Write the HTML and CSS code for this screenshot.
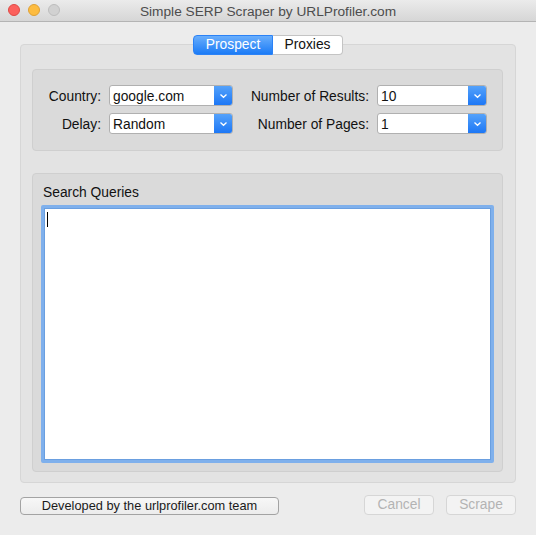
FILE: index.html
```html
<!DOCTYPE html>
<html>
<head>
<meta charset="utf-8">
<link rel="stylesheet" href="styles.css">
</head>
<body>
<div class="window">
  <div class="titlebar">
    <div class="lights">
      <span class="light red"></span>
      <span class="light yellow"></span>
      <span class="light gray"></span>
    </div>
    <div class="title">Simple SERP Scraper by URLProfiler.com</div>
  </div>
  <div class="content">
    <div class="tabs">
      <div class="seg seg-active">Prospect</div>
      <div class="seg">Proxies</div>
    </div>
    <div class="tabpanel">
      <div class="settings">
        <label class="lbl">Country:</label>
        <div class="select sel1"><span class="val">google.com</span><span class="arrow"><svg width="9" height="6" viewBox="0 0 9 6"><path d="M1.5 1.5 L4.5 4.3 L7.5 1.5" fill="none" stroke="#fff" stroke-width="1.3"/></svg></span></div>
        <label class="lbl">Number of Results:</label>
        <div class="select sel2"><span class="val">10</span><span class="arrow"><svg width="9" height="6" viewBox="0 0 9 6"><path d="M1.5 1.5 L4.5 4.3 L7.5 1.5" fill="none" stroke="#fff" stroke-width="1.3"/></svg></span></div>
        <label class="lbl">Delay:</label>
        <div class="select sel1"><span class="val">Random</span><span class="arrow"><svg width="9" height="6" viewBox="0 0 9 6"><path d="M1.5 1.5 L4.5 4.3 L7.5 1.5" fill="none" stroke="#fff" stroke-width="1.3"/></svg></span></div>
        <label class="lbl">Number of Pages:</label>
        <div class="select sel2"><span class="val">1</span><span class="arrow"><svg width="9" height="6" viewBox="0 0 9 6"><path d="M1.5 1.5 L4.5 4.3 L7.5 1.5" fill="none" stroke="#fff" stroke-width="1.3"/></svg></span></div>
      </div>
      <div class="queries">
        <div class="qlabel">Search Queries</div>
        <div class="textarea"><span class="caret"></span></div>
      </div>
    </div>
    <div class="footer">
      <div class="btn credit">Developed by the urlprofiler.com team</div>
      <div class="actions">
        <div class="btn disabled">Cancel</div>
        <div class="btn disabled">Scrape</div>
      </div>
    </div>
  </div>
</div>
</body>
</html>
```

FILE: styles.css
```css
html, body {
  margin: 0;
  padding: 0;
}
body {
  font-family: "Liberation Sans", Arial, sans-serif;
  font-size: 13.8px;
  color: #1a1a1a;
  background: #ececec;
}
.window {
  width: 536px;
  height: 535px;
  background: #ececec;
  overflow: hidden;
}
.titlebar {
  height: 21px;
  border-bottom: 1px solid #b4b4b4;
  background: linear-gradient(#ebebeb, #d6d6d6);
  display: flex;
  align-items: center;
  position: relative;
}
.lights {
  display: flex;
  gap: 8px;
  padding-left: 8px;
  position: absolute;
  left: 0;
  top: 4px;
}
.light {
  width: 12px;
  height: 12px;
  border-radius: 50%;
  box-sizing: border-box;
}
.red { background: #fc605c; border: 1px solid #de4a45; }
.yellow { background: #fdbc40; border: 1px solid #dea135; }
.gray { background: #d1d1d1; border: 1px solid #bdbdbd; }
.title {
  flex: 1;
  text-align: center;
  color: #4d4d4d;
  font-size: 13.7px;
  padding-top: 1px;
}
.content {
  padding: 13px 20px 0 20px;
}
.tabs {
  display: flex;
  justify-content: center;
  position: relative;
  z-index: 2;
  height: 20px;
}
.seg {
  height: 20px;
  box-sizing: border-box;
  line-height: 18px;
  text-align: center;
  background: #fff;
  border: 1px solid #c4c4c4;
  border-left: none;
  border-radius: 0 4px 4px 0;
  width: 70px;
  color: #111;
}
.seg-active {
  width: 80px;
  color: #fff;
  border: 1px solid #2b82f6;
  border-radius: 4px 0 0 4px;
  background: linear-gradient(#69aefc, #1b7bf6);
}
.tabpanel {
  margin-top: -11px;
  height: 439px;
  box-sizing: border-box;
  background: #e3e3e3;
  border: 1px solid #d6d6d6;
  border-radius: 4px;
  padding: 24px 12px 0 11px;
}
.settings {
  height: 82px;
  box-sizing: border-box;
  background: #dadada;
  border: 1px solid #cfcfcf;
  border-radius: 4px;
  display: grid;
  grid-template-columns: 68px 124px 128px 110px;
  grid-template-rows: 21px 21px;
  column-gap: 8px;
  row-gap: 7px;
  padding-top: 15px;
  align-items: center;
}
.lbl {
  text-align: right;
  white-space: nowrap;
  color: #111;
  padding-top: 2px;
}
.select {
  height: 21px;
  box-sizing: border-box;
  background: #fff;
  border: 1px solid #b0b0b0;
  border-radius: 3px;
  display: flex;
  align-items: center;
  position: relative;
  overflow: hidden;
}
.val {
  flex: 1;
  padding-left: 3px;
  padding-top: 2px;
  color: #111;
}
.arrow {
  width: 19px;
  height: 21px;
  margin: -1px -1px -1px 0;
  background: linear-gradient(#57a4fb, #1a75f5);
  border-radius: 0 3px 3px 0;
  display: flex;
  align-items: center;
  justify-content: center;
}
.queries {
  margin-top: 22px;
  height: 299px;
  box-sizing: border-box;
  background: #dadada;
  border: 1px solid #cfcfcf;
  border-radius: 4px;
  padding: 11px 8px 0 8px;
}
.qlabel {
  padding-left: 2px;
  height: 20px;
  color: #111;
}
.textarea {
  height: 258px;
  box-sizing: border-box;
  background: #fff;
  border: 3px solid #7fb0ec;
  border-radius: 2px;
  box-shadow: inset 0 0 0 1px #6a9fe0;
  padding: 4px 0 0 3px;
}
.caret {
  display: block;
  width: 1px;
  height: 15px;
  background: #000;
}
.footer {
  display: flex;
  justify-content: space-between;
  align-items: center;
  margin-top: 12px;
}
.btn {
  box-sizing: border-box;
  text-align: center;
  border-radius: 4px;
}
.credit {
  width: 259px;
  height: 18px;
  line-height: 16px;
  font-size: 12.8px;
  border: 1px solid #a3a3a3;
  background: linear-gradient(#f7f7f7, #ececec);
  color: #1a1a1a;
  margin-top: 1px;
}
.actions {
  display: flex;
  gap: 12px;
}
.disabled {
  width: 70px;
  height: 20px;
  line-height: 18px;
  border: 1px solid #d6d6d6;
  background: #f3f3f3;
  color: #b3b3b3;
}
```
